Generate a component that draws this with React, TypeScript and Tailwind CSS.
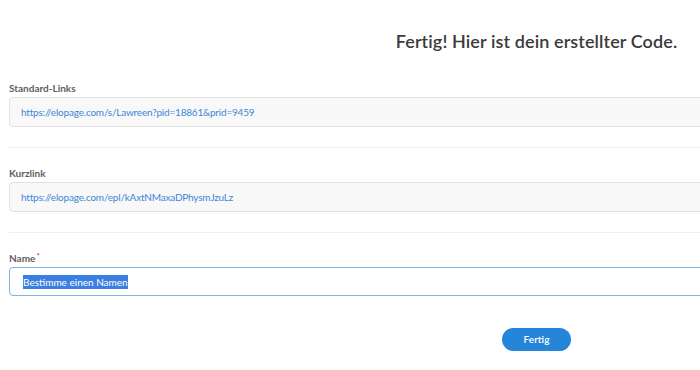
import React from 'react';

const font = { fontFamily: 'Lato, "Liberation Sans", sans-serif' };

function ReadonlyField({ label, value }: { label: string; value: string }) {
  return (
    <div>
      <label className="block h-[14px] text-[10px] leading-[14px] font-bold text-[#5e5e5e]">{label}</label>
      <div className="mt-[2px] h-[30px] flex items-center pl-[11px] bg-[#f8f8f8] border border-[#e2e2e2] rounded-[4px] text-[10px] tracking-[-0.2px] text-[#3c87d8]">
        {value}
      </div>
    </div>
  );
}

export default function App() {
  return (
    <div className="w-[700px] h-[370px] overflow-hidden bg-white" style={font}>
      <div className="w-[1064px] pl-[9px]">
        {/* TITLE */}
        <h1 className="pt-[29px] h-[58px] text-center text-[18px] leading-[24px] font-semibold text-[#3a3a3a] tracking-[0.1px]">
          Fertig! Hier ist dein erstellter Code.
        </h1>

        <div className="mt-[23px]">
          <ReadonlyField label="Standard-Links" value="https://elopage.com/s/Lawreen?pid=18861&prid=9459" />
        </div>
        <div className="mt-[20px] border-t border-[#f0f0f0]" />

        <div className="mt-[18px]">
          <ReadonlyField label="Kurzlink" value="https://elopage.com/epl/kAxtNMaxaDPhysmJzuLz" />
        </div>
        <div className="mt-[20px] border-t border-[#f0f0f0]" />

        {/* NAME */}
        <div className="mt-[18px]">
          <label className="block h-[14px] text-[10px] leading-[14px] font-bold text-[#5e5e5e]">
            Name<span className="relative -top-[3px] ml-[1px] text-[8px] text-[#e0424a]">*</span>
          </label>
          <div className="mt-[2px] h-[29px] flex items-center pl-[13px] bg-white border border-[#7db5ea] rounded-[4px] text-[10px] text-[#333]">
            <span className="bg-[#3b7fe0] text-white leading-[14px]">Bestimme einen Namen</span>
          </div>
        </div>

        <div className="mt-[32px] flex justify-center">
          <button className="w-[69px] h-[23px] rounded-full bg-[#2585d9] text-white text-[10px] font-semibold">
            Fertig
          </button>
        </div>
      </div>
    </div>
  );
}
